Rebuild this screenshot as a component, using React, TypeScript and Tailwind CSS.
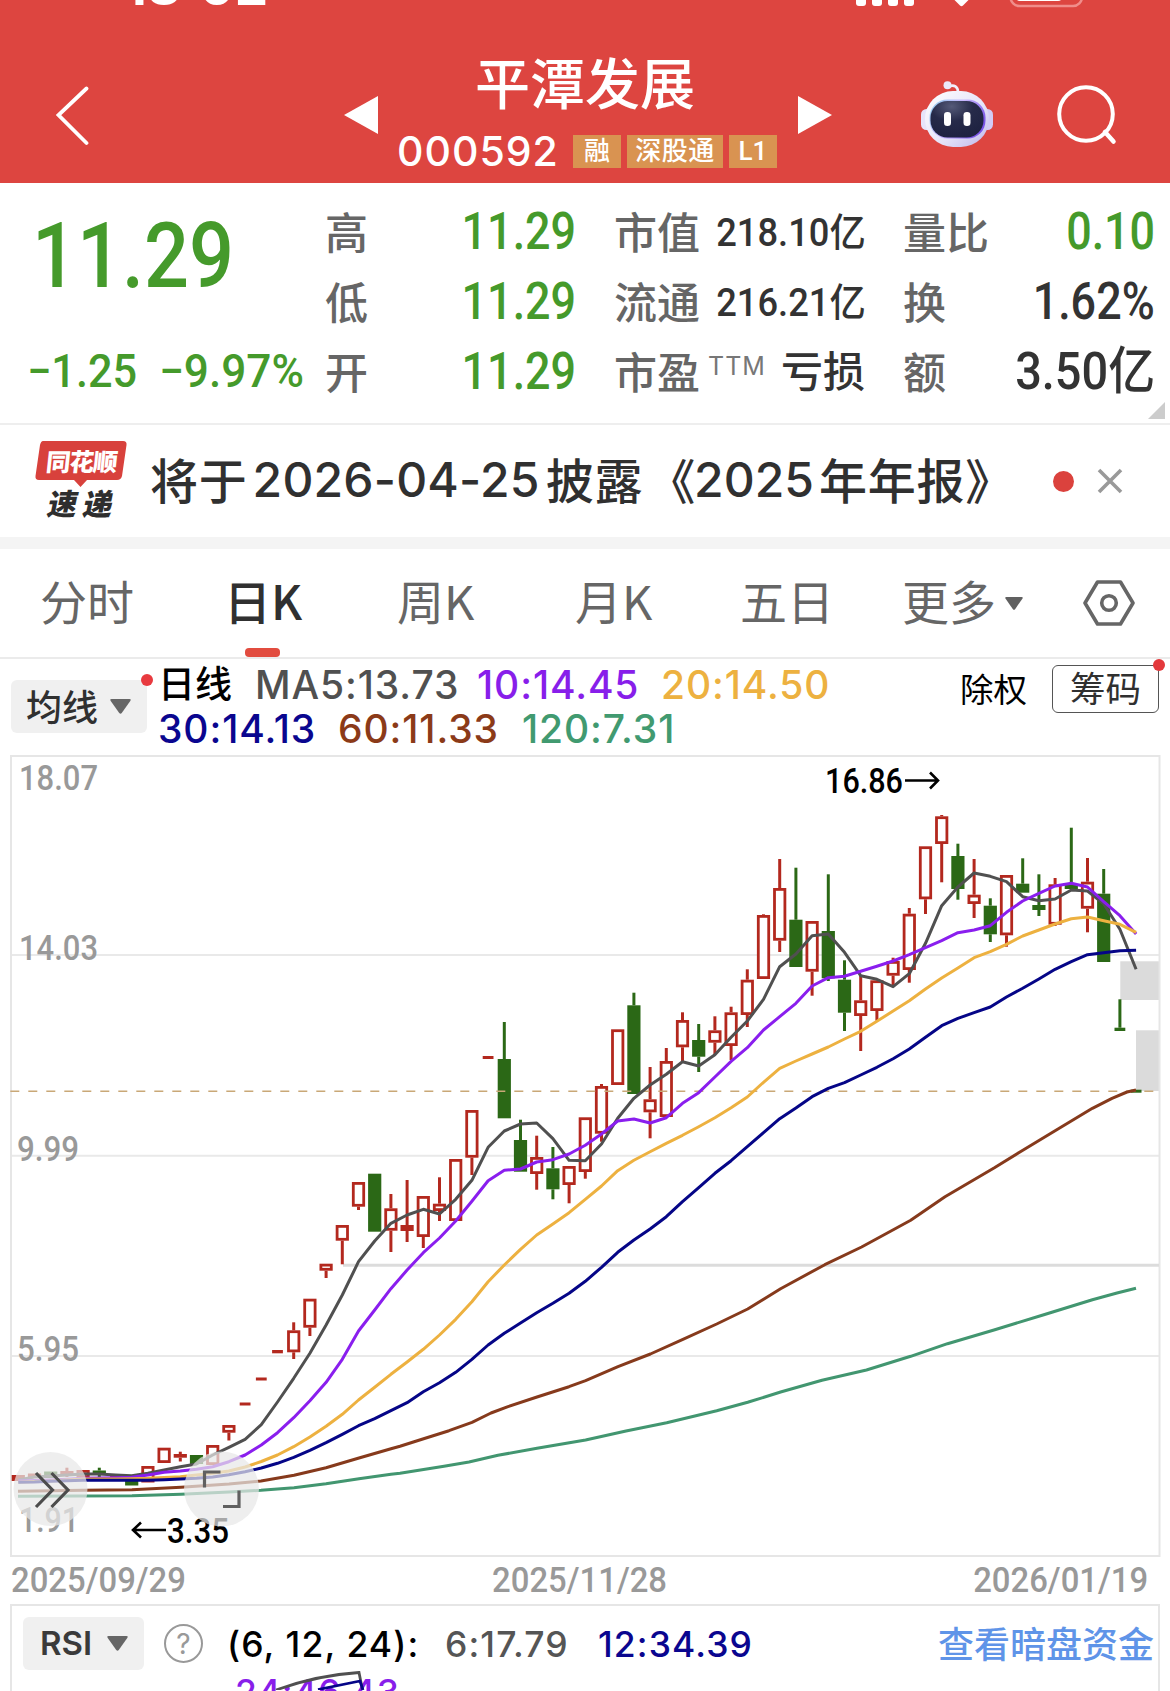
import React from "react";

const SERIES_START = 18.3;
const STEP = 16.2;
const RED = "#b3281e";
const GREEN = "#2b6816";

type Candle = [color: "r" | "g", high: number, top: number, bottom: number, low: number];

const candles: Candle[] = [
  ["r", 1475, 1475, 1481, 1481],
  ["r", 1473.5, 1473.5, 1477.5, 1477.5],
  ["g", 1471.5, 1471.5, 1478, 1478],
  ["r", 1467.7, 1471, 1475, 1477],
  ["r", 1470, 1470, 1478, 1478],
  ["g", 1467.7, 1470.5, 1474.5, 1477],
  ["r", 1474, 1474, 1477, 1477],
  ["g", 1478.5, 1478.5, 1485.5, 1485.5],
  ["r", 1466, 1466, 1482.5, 1482.5],
  ["r", 1447.7, 1447.7, 1463, 1463],
  ["r", 1451.7, 1454, 1457.7, 1461.5],
  ["g", 1455, 1455, 1464, 1464],
  ["r", 1445, 1445, 1465, 1465],
  ["r", 1425, 1425, 1432.7, 1440.5],
  ["r", 1402.5, 1402.5, 1405.5, 1405.5],
  ["r", 1377.5, 1377.5, 1380.5, 1380.5],
  ["r", 1350, 1350, 1353.3, 1353.3],
  ["r", 1322.3, 1330.3, 1352.3, 1359],
  ["r", 1298.7, 1298.7, 1327.7, 1336],
  ["r", 1263.7, 1263.7, 1270.7, 1278],
  ["r", 1225, 1225, 1240.7, 1264.3],
  ["r", 1182, 1182, 1206.7, 1210],
  ["g", 1173.7, 1173.7, 1231.7, 1231.7],
  ["r", 1194, 1208.3, 1230.7, 1252],
  ["r", 1180, 1225, 1231, 1242],
  ["r", 1196, 1196, 1237, 1248],
  ["r", 1177.3, 1203.7, 1211, 1221],
  ["r", 1159, 1159, 1221, 1221],
  ["r", 1110, 1110, 1157.7, 1175],
  ["r", 1056, 1056, 1059, 1059],
  ["g", 1022, 1059, 1118.3, 1118.3],
  ["g", 1119.7, 1140, 1171.7, 1171.7],
  ["r", 1135.7, 1157, 1174, 1189.7],
  ["g", 1147, 1168.3, 1189.3, 1199.3],
  ["r", 1166, 1166, 1185, 1203.3],
  ["r", 1117.3, 1117.3, 1172, 1178.7],
  ["r", 1084, 1086, 1133.7, 1141.7],
  ["r", 1029.3, 1029.3, 1085, 1085],
  ["g", 992.7, 1005.3, 1094, 1094],
  ["r", 1067, 1099.3, 1112.3, 1138.3],
  ["r", 1048, 1061, 1117, 1117],
  ["r", 1012.3, 1020, 1047.3, 1061.7],
  ["g", 1024, 1040, 1056.7, 1072],
  ["r", 1016.3, 1030.3, 1042.7, 1054],
  ["r", 1006.7, 1012.3, 1046, 1060],
  ["r", 969.3, 979.7, 1015, 1027],
  ["r", 914.3, 915, 979, 979],
  ["r", 859, 888, 940.7, 952],
  ["g", 867.7, 919.7, 967, 967],
  ["r", 921, 921, 971.7, 995.7],
  ["g", 874.3, 931, 978.3, 981],
  ["g", 960.3, 979.7, 1012.7, 1031],
  ["r", 975, 1000.3, 1016, 1051],
  ["r", 980.3, 980.3, 1011, 1020.7],
  ["r", 957.7, 961, 975.7, 985.7],
  ["r", 908, 913.7, 970, 982.7],
  ["r", 846.3, 846.3, 899.3, 914],
  ["r", 815, 816.3, 844, 882.3],
  ["g", 843.7, 856, 889, 899.7],
  ["r", 859, 894.7, 904, 918],
  ["g", 898.3, 905.7, 934.3, 942],
  ["r", 875, 875, 935.3, 946.7],
  ["g", 858.3, 883.7, 892.7, 892.7],
  ["g", 874.3, 905, 910, 916],
  ["r", 878, 884.3, 924.7, 926],
  ["g", 827.7, 885, 889, 889],
  ["r", 858, 881.7, 908.7, 932.3],
  ["g", 869, 893.7, 962, 962],
  ["g", 999.3, 1027.7, 1031, 1031],
  ["g", 1089.7, 1089.7, 1092.7, 1092.7],
];

const ma5 = [
  1480, 1477, 1476, 1475, 1474, 1474, 1475, 1475.7, 1473.3, 1470, 1466.7, 1464, 1455, 1447.3, 1439.3, 1424.7, 1402,
  1378.3, 1353.3, 1325, 1295, 1261.7, 1241, 1223.3, 1215, 1209.3, 1214, 1199.3, 1180.3, 1147.3, 1131, 1124, 1123,
  1138.7, 1160.3, 1160.7, 1144, 1118.3, 1098.3, 1085, 1074.3, 1061.7, 1066, 1054.7, 1037.3, 1021, 999.3, 966.7, 954,
  935.7, 934, 952.3, 975.7, 979.3, 986.7, 973.7, 943.3, 905.7, 887, 873, 876.3, 881.7, 896.7, 900.7, 899, 890, 891,
  903.7, 929.3, 969.3,
];
const ma10 = [
  1481, 1480.5, 1480, 1479.3, 1478.3, 1478, 1477.7, 1477.3, 1475, 1472.3, 1471, 1469.3, 1466.7, 1461.7, 1455, 1445,
  1432.7, 1417.7, 1400.7, 1382.3, 1359.3, 1331, 1310, 1288.7, 1270, 1252.7, 1238, 1221, 1201.3, 1180.7, 1170.3, 1169,
  1162, 1159.7, 1154, 1145.3, 1134, 1121, 1119, 1123, 1117.7, 1103.3, 1092.7, 1077, 1061.3, 1047.7, 1030, 1016.7,
  1003.3, 986, 977.7, 976.3, 971.3, 966.3, 961, 954.7, 947.7, 940.7, 932.7, 930, 925.7, 912.3, 901, 893.3, 886, 883.3,
  887, 901.7, 915.7, 934,
];
const ma20 = [
  1482.3, 1481.5, 1481, 1480, 1479, 1479, 1479, 1478.7, 1478.3, 1477.5, 1476.7, 1475, 1473.3, 1471, 1467, 1461.5, 1455,
  1446.7, 1437, 1426.3, 1414.3, 1400, 1387.3, 1374.3, 1362, 1349.3, 1335, 1319.3, 1301.7, 1281.7, 1265, 1249.3, 1235,
  1224, 1212.7, 1199.3, 1186, 1170.7, 1160.3, 1151.7, 1143.3, 1135.3, 1126.7, 1117.7, 1107.7, 1097, 1082.3, 1068.3,
  1061, 1054, 1047, 1039, 1031.3, 1021.3, 1011, 1000.7, 989, 978, 968, 957.7, 951.7, 944.3, 936, 930, 924, 918.7, 917,
  920.7, 924.3, 932.3,
];
const ma30 = [
  1482.3, 1482, 1481.3, 1480.7, 1480.3, 1480.3, 1480.3, 1480.3, 1480.3, 1479.7, 1479, 1478.3, 1477, 1474.7, 1471.7,
  1468, 1463.3, 1457.3, 1450.3, 1442.7, 1434.3, 1425.7, 1418.7, 1410.7, 1402.7, 1391.7, 1382.7, 1372.3, 1359.3, 1345,
  1333.3, 1323, 1312.7, 1303.3, 1293.3, 1281.3, 1267.3, 1252.3, 1240, 1229, 1216.7, 1201.7, 1187.7, 1173.3, 1160.7,
  1146.7, 1132.7, 1118.7, 1108, 1096.7, 1088.3, 1082.7, 1075, 1067.3, 1058.7, 1049, 1037.3, 1025.7, 1018.3, 1012.7,
  1007, 997, 988.3, 979, 969.3, 961.7, 954.7, 952.7, 950.7, 950.3,
];
const ma60 =
  "18,1491.3 83,1490.3 132,1489.7 181,1487.3 229,1484 261,1481 294,1475.3 326,1467.7 359,1458 391,1448.7 400,1446.2 423.6,1438.7 449,1430.7 472,1422.3 491,1413 508,1406.7 537,1397 569,1386.7 585.6,1380.7 618,1366.7 650.4,1354 682.9,1339.3 716.7,1324 747.7,1309 780.6,1288.7 824.8,1264.7 861.6,1247 891,1231 910.7,1220.3 945,1196.7 994,1168 1018.7,1152.7 1058,1129 1092.4,1108.3 1112,1098.3 1127,1092 1136,1090";
const ma120 =
  "18,1496.3 132,1495.7 181,1494.3 229,1492 261,1490.3 294,1487.7 326,1483.7 359,1478.7 391,1474.3 400,1473.3 444,1466.3 469,1462 498,1455.3 537,1448.3 585.6,1440 626,1431 666.7,1422.7 716.7,1410.7 747.7,1402.3 780.6,1392 822,1380.3 866.5,1370 910.7,1356.3 947.5,1343.7 994,1330 1043,1315 1092.4,1299.7 1117,1293 1136,1288.3";

const xAt = (i: number) => SERIES_START + STEP * i;
const toPoints = (ys: number[]) => ys.map((y, i) => `${xAt(i).toFixed(1)},${y}`).join(" ");

function CandleMark({ index, data }: { index: number; data: Candle }) {
  const [kind, high, top, bottom, low] = data;
  const x = xAt(index);
  const color = kind === "r" ? RED : GREEN;
  const height = bottom - top;
  const half = height < 3.5 ? 5.4 : 6.6;
  const hollow = kind === "r" && height >= 6.5;
  return (
    <g>
      {high < top && <line x1={x} x2={x} y1={high} y2={top} stroke={color} strokeWidth={3} />}
      {low > bottom && <line x1={x} x2={x} y1={bottom} y2={low} stroke={color} strokeWidth={3} />}
      {hollow ? (
        <rect x={x - half + 1.4} y={top + 1.4} width={half * 2 - 2.8} height={height - 2.8} fill="#fff" stroke={color} strokeWidth={2.8} />
      ) : (
        <rect x={x - half} y={top} width={half * 2} height={height} fill={color} />
      )}
    </g>
  );
}

function Chart() {
  return (
    <svg viewBox="0 755 1170 803" className="block h-[803px] w-[1170px]">
      {[955, 1155.7, 1356].map((y) => (
        <line key={y} x1={11} x2={1159} y1={y} y2={y} stroke="#e9e9e9" strokeWidth={2} />
      ))}
      <g className="fill-[#999] font-['Roboto'] text-[35px] font-medium">
        <text x={19} y={790} textLength={79} lengthAdjust="spacingAndGlyphs">18.07</text>
        <text x={19} y={960} textLength={79} lengthAdjust="spacingAndGlyphs">14.03</text>
        <text x={17} y={1160.5} textLength={62} lengthAdjust="spacingAndGlyphs">9.99</text>
        <text x={17} y={1361} textLength={62} lengthAdjust="spacingAndGlyphs">5.95</text>
        <text x={19} y={1531.5} textLength={60} lengthAdjust="spacingAndGlyphs">1.91</text>
      </g>
      <rect x={11} y={756} width={1148.5} height={800} fill="none" stroke="#e6e6e6" strokeWidth={2} />
      <line x1={343} x2={1159} y1={1265.3} y2={1265.3} stroke="#dcdcdc" strokeWidth={3} />
      <rect x={1120.3} y={961.3} width={38.5} height={38.7} fill="#dbdbdb" />
      <rect x={1136} y={1030.3} width={22.8} height={60.7} fill="#dbdbdb" />
      {candles.map((c, i) => (
        <CandleMark key={i} index={i} data={c} />
      ))}
      <line x1={10.3} x2={1159} y1={1091.3} y2={1091.3} stroke="#c9a877" strokeWidth={1.6} strokeDasharray="9 9" />
      <g fill="none" strokeWidth={3} strokeLinejoin="round">
        <polyline points={toPoints(ma5)} stroke="#505050" />
        <polyline points={toPoints(ma10)} stroke="#8a1eee" />
        <polyline points={toPoints(ma20)} stroke="#edb140" />
        <polyline points={toPoints(ma30)} stroke="#050587" />
        <polyline points={ma60} stroke="#863a1c" />
        <polyline points={ma120} stroke="#429670" />
      </g>
      <g className="fill-black font-['Roboto'] text-[35px] font-medium">
        <text x={825} y={793} textLength={78} lengthAdjust="spacingAndGlyphs">16.86</text>
        <text x={167} y={1543} textLength={62} lengthAdjust="spacingAndGlyphs">3.35</text>
      </g>
      <g fill="none" stroke="#000" strokeWidth={2.6}>
        <path d="M905 780.5H938M930 772.5L938 780.5L930 788.5" />
        <path d="M166 1530H133M141 1522.5L133 1530L141 1537.5" />
      </g>
      <circle cx={50.5} cy={1489} r={37} fill="#e8e8e8" fillOpacity={0.72} />
      <circle cx={221.5} cy={1489} r={37.5} fill="#e8e8e8" fillOpacity={0.72} />
      <g fill="none" stroke="#4c4c4c" strokeWidth={3.2}>
        <path d="M36 1473L52.5 1490L36 1507M51.5 1473L68 1490L51.5 1507" />
        <path d="M204.5 1487.5V1472H220.5M223 1506.5H239V1490.5" stroke="#606060" />
      </g>
    </svg>
  );
}

function Caret({ className }: { className: string }) {
  return (
    <svg viewBox="0 0 20 15" preserveAspectRatio="none" className={className}>
      <path d="M1.5 0H18.5Q20.5 0 19.3 2L11.2 14Q10 15.6 8.8 14L0.7 2Q-0.5 0 1.5 0Z" fill="currentColor" />
    </svg>
  );
}

function Robot() {
  return (
    <svg viewBox="0 0 72 66" className="h-[66px] w-[72px]">
      <defs>
        <linearGradient id="shell" x1="0" y1="0" x2="1" y2="1">
          <stop offset="0" stopColor="#ffffff" />
          <stop offset="0.6" stopColor="#e4e2f8" />
          <stop offset="1" stopColor="#bdb4ea" />
        </linearGradient>
        <linearGradient id="rim" x1="0" y1="0" x2="1" y2="0.5">
          <stop offset="0" stopColor="#8fd0ea" />
          <stop offset="0.5" stopColor="#c9b8ff" />
          <stop offset="1" stopColor="#7a55e8" />
        </linearGradient>
        <radialGradient id="face" cx="0.4" cy="0.15" r="0.9">
          <stop offset="0" stopColor="#555a78" />
          <stop offset="0.45" stopColor="#262a49" />
          <stop offset="1" stopColor="#1d2140" />
        </radialGradient>
      </defs>
      <path d="M28 5.5C33 3 37 6 37 11" fill="none" stroke="#f1effc" strokeWidth="2.6" />
      <circle cx="26.5" cy="4.3" r="4" fill="#ebe9fb" />
      <rect x="0" y="28" width="12" height="21" rx="5.5" fill="#e7e4fa" />
      <rect x="60" y="28" width="12" height="21" rx="5.5" fill="#d3cbf5" />
      <rect x="4" y="10" width="64" height="56" rx="28" fill="url(#shell)" />
      <rect x="8.5" y="18.5" width="56" height="39" rx="18" fill="url(#rim)" />
      <rect x="9.5" y="20" width="53" height="36.5" rx="17" fill="url(#face)" />
      <rect x="23" y="31" width="7" height="14" rx="3.3" fill="#fff" />
      <rect x="42.5" y="31" width="7" height="14" rx="3.3" fill="#fff" />
    </svg>
  );
}

function Header() {
  return (
    <header className="relative flex h-[183px] overflow-hidden bg-[#dd4540] text-white">
      <span className="absolute top-[-44px] left-[124px] font-['Inter'] text-[53px] leading-[60px] font-bold">18:02</span>
      <svg viewBox="0 0 240 10" className="absolute top-0 left-[850px] h-[10px] w-[240px]">
        <g fill="#fff">
          <rect x="6" y="-8" width="10" height="14" rx="3" />
          <rect x="22" y="-8" width="10" height="14" rx="3" />
          <rect x="38" y="-8" width="10" height="14" rx="3" />
          <rect x="54" y="-8" width="10" height="14" rx="3" />
          <path d="M104.5 0H118.5L113 5.5Q111.500 7 110 5.500Z" />
          <rect x="166" y="-12" width="46" height="13" rx="4" />
        </g>
        <rect x="160.500" y="-20" width="71.500" height="26" rx="9" fill="none" stroke="#f08d8a" strokeWidth="2.500" />
      </svg>
      <div className="flex w-[397px] items-start justify-between pt-[86px] pr-[19px] pl-[54px]">
        <svg viewBox="0 0 36 60" className="h-[60px] w-[36px]">
          <path d="M32.500 2.500L4.500 29L32.500 57" fill="none" stroke="#fff" strokeWidth="3.800" strokeLinecap="round" />
        </svg>
        <svg viewBox="0 0 34 38" className="mt-[10px] h-[38px] w-[34px]">
          <path d="M0 19L34 0V38Z" fill="#fff" />
        </svg>
      </div>
      <div className="flex w-[380px] flex-col pt-[48px]">
        <h1 className="w-[376px] text-center font-['Noto_Sans_CJK_SC'] text-[55px] leading-[64px] font-medium">平潭发展</h1>
        <div className="mt-[23px] flex h-[33px] w-full items-center">
          <span className="w-[176px] font-['Inter'] text-[41px] leading-[33px] font-medium tracking-[1px]">000592</span>
          <div className="flex gap-[6px] font-['Roboto',_'Noto_Sans_CJK_SC'] text-[26px] leading-[33px] font-medium">
            <span className="h-[33px] w-[48px] bg-[#d99351] text-center">融</span>
            <span className="h-[33px] w-[96px] bg-[#d99351] text-center tracking-[0.5px]">深股通</span>
            <span className="h-[33px] w-[48px] bg-[#d99351] text-center">L1</span>
          </div>
        </div>
      </div>
      <svg viewBox="0 0 34 38" className="mt-[96px] ml-[21px] h-[38px] w-[34px]">
        <path d="M34 19L0 0V38Z" fill="#fff" />
      </svg>
      <div className="mt-[81px] ml-[89px]">
        <Robot />
      </div>
      <svg viewBox="0 0 64 64" className="mt-[84px] ml-[63px] h-[64px] w-[64px]">
        <circle cx="30" cy="30" r="26.800" fill="none" stroke="#fff" strokeWidth="4" />
        <path d="M49 48L57.500 57.500" stroke="#fff" strokeWidth="4.500" strokeLinecap="round" />
      </svg>
    </header>
  );
}

function Stat({ label, sup, children }: { label: string; sup?: string; children: React.ReactNode }) {
  return (
    <div className="flex h-[70px] items-center justify-between whitespace-nowrap">
      <span className="flex items-center pt-[3px] text-[43px] font-medium text-[#666]">
        {label}
        {sup && <sup className="top-[-8px] ml-[8px] font-['Inter'] text-[25px] leading-[25px] font-normal tracking-[1px] text-[#777]">{sup}</sup>}
      </span>
      {children}
    </div>
  );
}

function Quote() {
  const value = "origin-right scale-x-[0.88] pb-[3px] font-['Roboto'] text-[51px] font-medium";
  return (
    <section className="relative flex h-[242px] border-b-2 border-[#eee] pt-[15px] font-['Roboto',_'Noto_Sans_CJK_SC'] leading-none">
      <div className="w-[325px] text-[#459a2b]">
        <div className="h-[140px] pt-[13px] pl-[32px]">
          <span className="inline-block origin-left scale-x-[0.87] font-['Roboto'] text-[91px] font-medium">11.29</span>
        </div>
        <div className="flex h-[70px] items-center pb-[4px] pl-[27px] font-['Roboto'] text-[46px] font-medium">
          <span className="w-[132px] origin-left scale-x-[0.94] whitespace-nowrap">−1.25</span>
          <span className="origin-left scale-x-[0.96] whitespace-nowrap">−9.97%</span>
        </div>
      </div>
      <div className="w-[251px]">
        <Stat label="高"><span className={`${value} text-[#459a2b]`}>11.29</span></Stat>
        <Stat label="低"><span className={`${value} text-[#459a2b]`}>11.29</span></Stat>
        <Stat label="开"><span className={`${value} text-[#459a2b]`}>11.29</span></Stat>
      </div>
      <div className="ml-[38px] w-[252px] text-[#333]">
        <Stat label="市值"><span className="origin-right scale-x-[0.93] text-[39px] font-medium">218.10亿</span></Stat>
        <Stat label="流通"><span className="origin-right scale-x-[0.93] text-[39px] font-medium">216.21亿</span></Stat>
        <Stat label="市盈" sup="TTM"><span className="mr-[1px] text-[42px] font-medium">亏损</span></Stat>
      </div>
      <div className="ml-[37px] w-[252px] text-[#333]">
        <Stat label="量比"><span className={`${value} text-[#459a2b]`}>0.10</span></Stat>
        <Stat label="换"><span className={value}>1.62%</span></Stat>
        <Stat label="额">
          <span className="origin-right scale-x-[0.92] pb-[3px] font-['Roboto',_'Noto_Sans_CJK_SC'] text-[51px] font-medium">3.50亿</span>
        </Stat>
      </div>
      <svg viewBox="0 0 17 17" className="absolute right-[5px] bottom-[4px] h-[17px] w-[17px]">
        <path d="M17 0V17H0Z" fill="#ccc" />
      </svg>
    </section>
  );
}

function News() {
  return (
    <section className="flex h-[124px] items-center border-b-[12px] border-[#f4f4f4] pl-[35px] whitespace-nowrap">
      <div className="relative mr-[23px] h-[80px] w-[92px] font-['Noto_Sans_CJK_SC'] leading-none font-black">
        <svg viewBox="0 0 92 46" className="absolute top-0 left-0 h-[46px] w-[92px]">
          <path d="M8 0H88Q92 0 91.500 4L87 35Q86 39 82 39H52L45.500 46L39 39H4Q0 39 0.500 35L5 4Q6 0 8 0Z" fill="#d8413c" />
        </svg>
        <div className="relative -skew-x-6 pt-[8px] pl-[2px] text-center text-[24.500px] tracking-[-1px] text-white">同花顺</div>
        <div className="-skew-x-12 pt-[14px] pl-[15px] text-[29.500px] tracking-[6px] text-[#2e2e2e]">速递</div>
      </div>
      <p className="flex w-[842px] items-center font-['Noto_Sans_CJK_SC'] text-[48px] leading-none font-medium tracking-[0.800px] text-[#303030]">
        <span className="pb-[7px]">将于</span>
        <span className="ml-[5px] pb-[3px] font-['Inter'] text-[48px] tracking-[0.200px]">2026-04-25</span>
        <span className="ml-[6px] pb-[7px]">披露</span>
        <span className="ml-[4px] pb-[7px]">《</span>
        <span className="-ml-[2px] pb-[3px] font-['Inter'] text-[48px] tracking-[0px]">2025</span>
        <span className="ml-[5px] pb-[7px]">年年报》</span>
      </p>
      <span className="ml-[61px] h-[21px] w-[21px] rounded-full bg-[#db423d]" />
      <svg viewBox="0 0 26 26" className="ml-[23px] h-[26px] w-[26px]">
        <path d="M2 2L24 24M24 2L2 24" stroke="#999" strokeWidth="3.600" />
      </svg>
    </section>
  );
}

function Tabs() {
  return (
    <nav className="relative h-[110px] border-b-2 border-[#ebebeb]">
      <div className="flex h-[108px] items-center font-['Noto_Sans_CJK_SC'] text-[47px] leading-none font-normal whitespace-nowrap text-[#666]">
        <span className="ml-[40px] w-[184px] pb-[7px]">分时</span>
        <span className="w-[173px] pb-[7px] font-medium text-[#303030]">日K</span>
        <span className="w-[178px] pb-[7px]">周K</span>
        <span className="w-[165px] pb-[7px]">月K</span>
        <span className="w-[162px] pb-[7px]">五日</span>
        <span className="w-[103px] pb-[7px]">更多</span>
        <Caret className="h-[13px] w-[18px] text-[#606060]" />
        <svg viewBox="0 0 52 48" className="ml-[60px] h-[48px] w-[52px]">
          <path d="M14.500 3H37.500L50 24L37.500 45H14.500L2 24Z" fill="none" stroke="#666" strokeWidth="3.600" strokeLinejoin="round" />
          <circle cx="26" cy="24" r="7.300" fill="none" stroke="#666" strokeWidth="3.600" />
        </svg>
      </div>
      <span className="absolute bottom-0 left-[245px] h-[9px] w-[35px] rounded-[4px] bg-[#e24c3f]" />
    </nav>
  );
}

function Averages() {
  return (
    <section className="flex h-[96px] pl-[11px] leading-none whitespace-nowrap">
      <div className="relative mt-[21px] flex h-[53px] w-[136px] items-center rounded-md bg-[#f0f0f0] pl-[15px] font-['Noto_Sans_CJK_SC'] text-[36px] font-medium text-[#303030]">
        <span className="pb-[3px]">均线</span>
        <Caret className="ml-[12px] h-[15px] w-[21px] text-[#666]" />
        <span className="absolute top-[-6px] right-[-6px] h-[12px] w-[12px] rounded-full bg-[#e83a3f]" />
      </div>
      <div className="ml-[11px] w-[788px] font-['Inter'] text-[39px] font-medium tracking-[0.900px]">
        <div className="flex h-[47px] items-center">
          <span className="w-[97px] font-['Noto_Sans_CJK_SC'] text-[37px] tracking-normal text-black">日线</span>
          <span className="w-[222px] pt-[3px] text-[#505050]">MA5:13.73</span>
          <span className="w-[184px] pt-[3px] text-[#881eea]">10:14.45</span>
          <span className="pt-[3px] text-[#edb140]">20:14.50</span>
        </div>
        <div className="flex h-[44px] items-center">
          <span className="w-[180px] text-[#0a068f]">30:14.13</span>
          <span className="w-[184px] text-[#8b3a18]">60:11.33</span>
          <span className="text-[#419a70]">120:7.31</span>
        </div>
      </div>
      <div className="flex items-start font-['Noto_Sans_CJK_SC']">
        <span className="mt-[12px] w-[92px] pl-[14px] text-[33.500px] text-black">除权</span>
      </div>
      <span className="relative mt-[6px] ml-[14px] h-[48px] w-[107px] rounded-md border-[1.500px] border-[#555] text-center font-['Noto_Sans_CJK_SC'] text-[35.500px] leading-[42px] text-[#303030]">
        筹码
        <span className="absolute top-[-7px] right-[-7px] h-[12px] w-[12px] rounded-full bg-[#e3393c]" />
      </span>
    </section>
  );
}

function Dates() {
  return (
    <div className="flex h-[46px] items-center justify-between pr-[22px] pl-[11px] font-['Roboto'] text-[35.500px] leading-none font-medium text-[#999]">
      <span className="origin-left scale-x-[0.925]">2025/09/29</span>
      <span className="origin-center scale-x-[0.925]">2025/11/28</span>
      <span className="origin-right scale-x-[0.925]">2026/01/19</span>
    </div>
  );
}

function Rsi() {
  return (
    <section className="relative ml-[10px] h-[100px] w-[1150px] overflow-hidden border-2 border-b-0 border-[#e6e6e6] font-['Inter'] text-[35.500px] leading-none font-medium tracking-[1.100px] whitespace-nowrap">
      <div className="mt-[11px] flex h-[53px] items-center pl-[11px]">
        <span className="flex h-[53px] w-[121px] items-center rounded-md bg-[#f0f0f0] pl-[17px] text-[33px] font-semibold tracking-normal text-[#3a3a3a]">
          RSI
          <Caret className="ml-[15px] h-[15px] w-[21px] text-[#666]" />
        </span>
        <span className="ml-[20px] flex h-[39px] w-[39px] items-center justify-center rounded-full border-[2.500px] border-[#999] text-[28px] font-normal tracking-normal text-[#999]">?</span>
        <span className="ml-[24px] w-[218px] pt-[3px] text-black">(6, 12, 24):</span>
        <span className="w-[153px] pt-[3px] text-[#555]">6:17.79</span>
        <span className="w-[340px] pt-[3px] text-[#0a068f]">12:34.39</span>
        <span className="pb-[4px] font-['Noto_Sans_CJK_SC'] text-[36px] font-medium tracking-normal text-[#5f94e8]">查看暗盘资金</span>
      </div>
      <span className="absolute top-[69px] left-[223px] text-[#881eea]">24:46.43</span>
      <svg viewBox="264 1671 102 20" className="absolute top-[64px] left-[252px] h-[20px] w-[102px]" fill="none" strokeWidth="2.800">
        <path d="M276 1691Q318 1676 359 1673.500L362.500 1691" stroke="#505050" />
        <path d="M318 1690.500L360 1682L363 1691" stroke="#050587" />
      </svg>
    </section>
  );
}

export default function App() {
  return (
    <main className="h-[1691px] w-[1170px] overflow-hidden bg-white">
      <Header />
      <Quote />
      <News />
      <Tabs />
      <Averages />
      <Chart />
      <Dates />
      <Rsi />
    </main>
  );
}
